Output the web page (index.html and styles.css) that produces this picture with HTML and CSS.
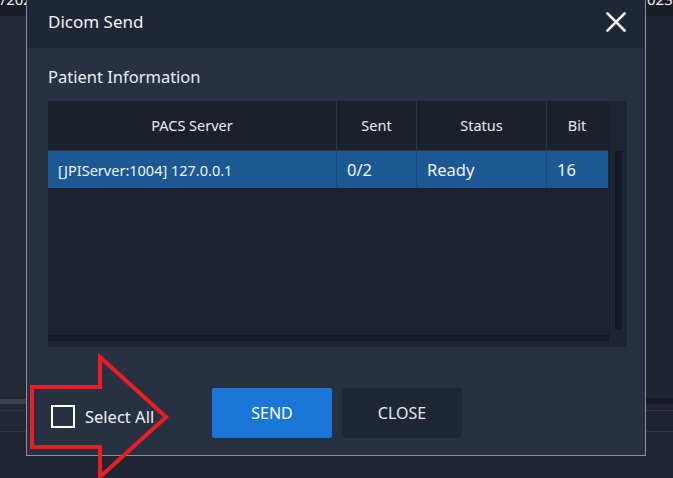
FILE: index.html
```html
<!DOCTYPE html>
<html>
<head>
<meta charset="utf-8">
<link rel="stylesheet" href="styles.css">
</head>
<body>
<div class="app">
  <div class="side side-left">
    <div class="band-top"><span class="clip-text">1/202</span></div>
    <div class="band-main"></div>
    <div class="band-hi"></div>
    <div class="band-gap"></div>
    <div class="band-line"></div>
    <div class="band-row"></div>
    <div class="band-line"></div>
    <div class="band-rest"></div>
  </div>
  <div class="app-mid"></div>
  <div class="side side-right">
    <div class="band-top"><span class="clip-text">023</span></div>
    <div class="band-main"></div>
    <div class="band-hi"></div>
    <div class="band-gap"></div>
    <div class="band-line"></div>
    <div class="band-row"></div>
    <div class="band-line"></div>
    <div class="band-rest"></div>
  </div>
</div>

<div class="dialog">
  <div class="titlebar">
    <span class="title">Dicom Send</span>
    <svg class="close-x" width="20" height="20" viewBox="0 0 20 20">
      <path d="M1.5 1.5 L18.5 18.5 M18.5 1.5 L1.5 18.5" stroke="#f2f3f5" stroke-width="2.6" stroke-linecap="square" fill="none"/>
    </svg>
  </div>
  <div class="dbody">
    <div class="section-title">Patient Information</div>
    <div class="tpanel">
      <div class="tmain">
        <div class="grid">
          <div class="tr thead">
            <div class="c c1">PACS Server</div>
            <div class="c c2">Sent</div>
            <div class="c c3">Status</div>
            <div class="c c4">Bit</div>
          </div>
          <div class="tr trow sel">
            <div class="c c1 small">[JPIServer:1004] 127.0.0.1</div>
            <div class="c c2">0/2</div>
            <div class="c c3">Ready</div>
            <div class="c c4">16</div>
          </div>
        </div>
        <div class="vscroll"><div class="vtrack"></div></div>
      </div>
      <div class="hscroll"><div class="htrack"></div></div>
    </div>
    <div class="actions">
      <label class="selall"><span class="cbox"></span><span>Select All</span></label>
      <button class="btn send">SEND</button>
      <button class="btn close">CLOSE</button>
    </div>
  </div>
</div>

<svg class="annot" width="673" height="478" viewBox="0 0 673 478">
  <polygon points="32,387 100,387 100,357 166,417 100,477 100,447 32,447" fill="none" stroke="#ec1c24" stroke-width="4" stroke-linejoin="miter"/>
</svg>
</body>
</html>
```

FILE: styles.css
```css
* { box-sizing: border-box; }
html, body { margin: 0; padding: 0; }
body {
  width: 673px;
  height: 478px;
  overflow: hidden;
  background: #1f2532;
  font-family: "Noto Sans", "Open Sans", sans-serif;
  color: #eef0f3;
  position: relative;
}

/* background application */
.app {
  display: flex;
  height: 478px;
}
.app-mid { flex: 1; background: #1f2532; }
.side { display: flex; flex-direction: column; overflow: hidden; }
.side-left { width: 26px; }
.side-right { width: 28px; }
.band-top {
  height: 16px;
  background: #191d27;
  position: relative;
  overflow: hidden;
}
.clip-text {
  display: block;
  font-size: 15px;
  line-height: 15px;
  margin-top: -8px;
  color: #f0f0f0;
  white-space: nowrap;
}
.side-left .clip-text { margin-left: -8px; }
.side-right .clip-text { margin-left: 2px; }
.band-main { height: 383px; background: #222836; }
.side-right .band-main { background: #1f2431; height: 382px; }
.band-hi { height: 5px; background: #394050; }
.side-right .band-hi { height: 6px; background: #151a24; }
.band-gap { height: 6px; background: #222836; }
.side-right .band-gap { background: #1f2532; }
.band-line { height: 1px; background: #2f3644; }
.band-row { height: 20px; background: #212735; }
.side-right .band-row { background: #1e2330; }
.band-rest { flex: 1; background: #1f2532; }

/* dialog */
.dialog {
  position: absolute;
  left: 26px;
  top: 0;
  width: 620px;
  height: 456px;
  border: 1px solid #8b9099;
  border-top: none;
  display: flex;
  flex-direction: column;
  background: #283142;
}
.titlebar {
  height: 48px;
  flex: none;
  background: #1f2636;
  display: flex;
  align-items: center;
  justify-content: space-between;
  padding: 0 19px 0 21px;
}
.title {
  font-size: 17px;
  color: #f2f3f5;
  margin-top: -6px;
}
.close-x { margin-top: -4px; }

.dbody {
  flex: 1;
  display: flex;
  flex-direction: column;
  padding: 0 18px 0 21px;
}
.section-title {
  font-size: 16.5px;
  line-height: 20px;
  margin-top: 19px;
  height: 34px;
  color: #eceef1;
}

.tpanel {
  height: 246px;
  background: #1f2432;
  display: flex;
  flex-direction: column;
}
.tmain {
  display: flex;
  height: 234px;
}
.grid {
  width: 560px;
  background: #1e222e;
}
.tr {
  display: grid;
  grid-template-columns: 289px 80px 130px 60px;
}
.thead {
  height: 50px;
  background: #1c202b;
  border-bottom: 1px solid #2c3341;
}
.thead .c {
  display: flex;
  align-items: center;
  justify-content: center;
  font-size: 14.5px;
  color: #e9ebef;
  border-right: 1px solid #2c3341;
  padding-bottom: 2px;
}
.trow {
  height: 37px;
}
.trow.sel { background: #1b5894; }
.trow .c {
  display: flex;
  align-items: center;
  padding-left: 10px;
  font-size: 16.5px;
  color: #f3f5f8;
  border-right: 1px solid #1d4a7a;
}
.trow .c.small { font-size: 14.5px; padding-left: 10px; }
.c4 { border-right: none !important; }

.vscroll {
  flex: 1;
  margin-left: 1px;
  background: #1f2533;
  border-left: 1px solid #1a1e28;
  display: flex;
  justify-content: center;
  padding-top: 50px;
}
.vtrack {
  width: 7px;
  height: 179px;
  background: #151a25;
}
.hscroll {
  height: 12px;
  padding-top: 0;
}
.htrack {
  width: 561px;
  height: 6px;
  background: #151a25;
}

.actions {
  display: flex;
  align-items: center;
  margin-top: 41px;
  height: 50px;
}
.selall {
  display: flex;
  align-items: center;
  width: 164px;
  font-size: 16.5px;
  color: #eef0f3;
  padding-left: 3px;
  padding-top: 6px;
}
.cbox {
  width: 24px;
  height: 23px;
  border: 2px solid #ffffff;
  margin-right: 10px;
  flex: none;
}
.btn {
  width: 120px;
  height: 50px;
  border: none;
  border-radius: 2px;
  font-family: "Noto Sans", "Open Sans", sans-serif;
  font-size: 16px;
  padding: 0;
}
.send { background: #1a77d5; color: #ffffff; }
.close { background: #1f2634; color: #e6e8ec; margin-left: 10px; }

.annot {
  position: absolute;
  left: 0;
  top: 0;
  pointer-events: none;
}
```
